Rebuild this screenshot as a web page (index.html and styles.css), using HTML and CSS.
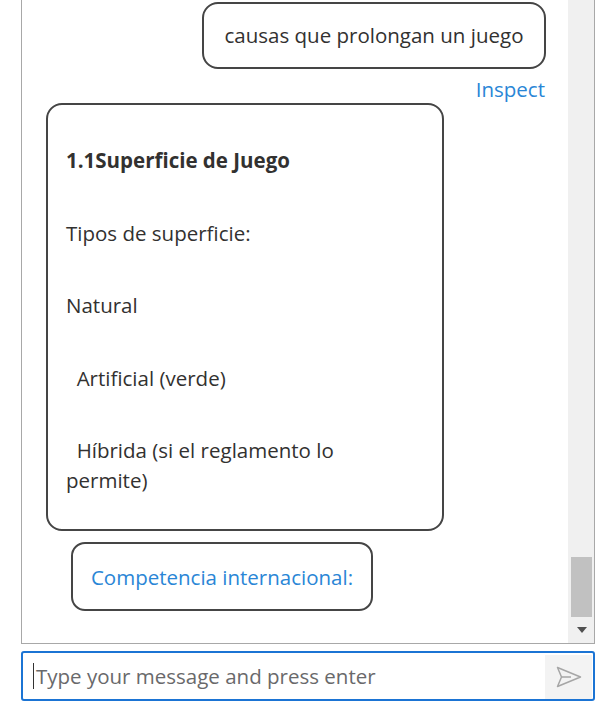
FILE: index.html
```html
<!DOCTYPE html>
<html lang="es">
<head>
<meta charset="utf-8">
<title>Chat</title>
<link rel="stylesheet" href="styles.css">
</head>
<body>
<div class="panel">
  <div class="messages">
    <div class="bubble user">causas que prolongan un juego</div>
    <a class="inspect" href="#">Inspect</a>
    <div class="bubble bot">
      <p class="title">1.1Superficie de Juego</p>
      <p>Tipos de superficie:</p>
      <p>Natural</p>
      <p>&nbsp;&nbsp;Artificial (verde)</p>
      <p>&nbsp;&nbsp;Híbrida (si el reglamento lo permite)</p>
    </div>
    <div class="bubble suggestion">Competencia internacional:</div>
  </div>
  <div class="scrollbar">
    <div class="track"></div>
    <div class="thumb"></div>
    <div class="arrow"><span class="tri"></span></div>
  </div>
</div>
<div class="composer">
  <div class="field"><span class="caret"></span><span class="placeholder">Type your message and press enter</span></div>
  <button class="send" aria-label="Send">
    <svg width="26" height="22" viewBox="0 0 26 22" fill="none" stroke="#a6a6a6" stroke-width="1.5" stroke-linejoin="round">
      <path d="M1.5 1.5 L24.5 11 L1.5 20.5 L5.5 11 Z"/>
      <path d="M5.5 11 H15"/>
    </svg>
  </button>
</div>
</body>
</html>
```

FILE: styles.css
```css
* { box-sizing: border-box; }

html, body {
  margin: 0;
  background: #ffffff;
}

body {
  padding: 0 7px 0 21px;
  font-family: "Open Sans", "Noto Sans", sans-serif;
  font-size: 20.5px;
  color: #323130;
}

.panel {
  display: flex;
  width: 574px;
  border-left: 1px solid #a8a8a8;
  border-right: 1px solid #a8a8a8;
  border-bottom: 1px solid #a8a8a8;
}

.messages {
  flex: 1;
  display: flex;
  flex-direction: column;
  align-items: flex-start;
  padding: 2px 0 32px 0;
}

.bubble {
  border: 2px solid #454545;
  background: #fff;
}

.user {
  align-self: flex-end;
  margin-right: 22px;
  border-radius: 16px;
  padding: 17px 10px;
  line-height: 29px;
  width: 344px;
  text-align: center;
  white-space: nowrap;
}

.inspect {
  align-self: flex-end;
  margin: 8px 23px 0 0;
  line-height: 24px;
  color: #2a86d6;
  text-decoration: none;
}

.bot {
  margin: 2px 0 0 24px;
  width: 398px;
  border-radius: 16px;
  padding: 40px 30px 34px 18px;
  line-height: 30px;
}

.bot p {
  margin: 0 0 42.5px 0;
}

.bot p:last-child {
  margin-bottom: 0;
}

.bot .title {
  font-weight: 700;
}

.suggestion {
  margin: 11px 0 0 49px;
  width: 302px;
  height: 69px;
  border-radius: 14px;
  display: flex;
  align-items: center;
  justify-content: center;
  color: #2a86d6;
  white-space: nowrap;
}

.scrollbar {
  width: 26px;
  background: #f0f0f0;
  display: flex;
  flex-direction: column;
}

.track { flex: 1; }

.thumb {
  height: 60px;
  margin: 0 2px 0 3px;
  background: #c1c1c1;
}

.arrow {
  height: 26px;
  display: flex;
  align-items: center;
  justify-content: center;
  padding-left: 1px;
}

.tri {
  width: 0;
  height: 0;
  border-left: 5.5px solid transparent;
  border-right: 5.5px solid transparent;
  border-top: 6px solid #505050;
}

.composer {
  margin-top: 7px;
  width: 574px;
  height: 50px;
  border: 2px solid #1b74d4;
  border-radius: 3px;
  display: flex;
  align-items: stretch;
}

.field {
  flex: 1;
  display: flex;
  align-items: center;
  padding-left: 10px;
}

.caret {
  width: 1px;
  height: 26px;
  background: #333;
  margin-right: 2px;
}

.placeholder {
  color: #69696b;
}

.send {
  width: 47px;
  margin: 2px 1px 0 0;
  border: none;
  background: #f3f3f3;
  display: flex;
  align-items: center;
  justify-content: center;
  padding: 0;
}
```
